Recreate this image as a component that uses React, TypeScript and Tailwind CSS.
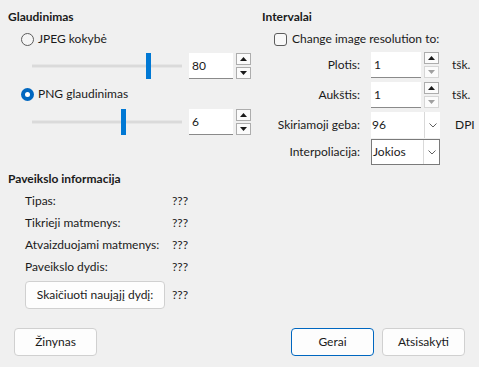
import React from 'react'

const FONT = { fontFamily: 'Lato, "Noto Sans", sans-serif' }

function Radio({ checked }: { checked?: boolean }) {
  return checked ? (
    <span className="w-[13px] h-[13px] rounded-full bg-[#0067c0] flex items-center justify-center shrink-0">
      <span className="w-[5px] h-[5px] rounded-full bg-white" />
    </span>
  ) : (
    <span className="w-[13px] h-[13px] rounded-full border border-[#5c5c5c] bg-[#f5f5f5] shrink-0" />
  )
}

function Arrow({ up, disabled }: { up?: boolean; disabled?: boolean }) {
  return (
    <svg width="7" height="4" viewBox="0 0 7 4">
      <path d={up ? 'M0 4 L3.5 0 L7 4 Z' : 'M0 0 L3.5 4 L7 0 Z'} fill={disabled ? '#a0a0a0' : '#1a1a1a'} />
    </svg>
  )
}

function SpinButtons({ downDisabled }: { downDisabled?: boolean }) {
  return (
    <div className="flex flex-col gap-[2px] ml-[3px] w-[15px]">
      <div className="h-[12px] border border-[#adadad] bg-[#fbfbfb] flex items-center justify-center">
        <Arrow up />
      </div>
      <div className={`h-[12px] border ${downDisabled ? 'border-[#d5d5d5]' : 'border-[#adadad]'} bg-[#fbfbfb] flex items-center justify-center`}>
        <Arrow disabled={downDisabled} />
      </div>
    </div>
  )
}

function SpinBox({ value, width, downDisabled }: { value: string; width: string; downDisabled?: boolean }) {
  return (
    <div className="flex items-center h-[26px]">
      <div className={`${width} h-[26px] bg-white border-b border-[#8a8a8a] flex items-center pl-[3px] text-[#1a1a1a]`}>{value}</div>
      <SpinButtons downDisabled={downDisabled} />
    </div>
  )
}

function Slider({ pos }: { pos: number }) {
  return (
    <div className="relative w-[150px] h-[26px] flex items-center">
      <div className="w-full h-[4px] bg-[#dadada] border-y border-[#e6e6e6]" />
      <div className="absolute top-0 w-[5px] h-[26px] bg-[#0078d4]" style={{ left: pos }} />
    </div>
  )
}

function Combo({ value, bordered }: { value: string; bordered?: boolean }) {
  return (
    <div className={`flex w-[69px] h-[26px] bg-white ${bordered ? 'border border-[#7a7a7a]' : ''}`}>
      <div className="flex-1 flex items-center pl-[1px] text-[#1a1a1a]">{value}</div>
      <div className="w-[16px] border-l border-[#d9d9d9] flex items-center justify-center">
        <svg width="8" height="5" viewBox="0 0 8 5">
          <path d="M0.5 0.5 L4 4 L7.5 0.5" fill="none" stroke="#606060" strokeWidth="1" />
        </svg>
      </div>
    </div>
  )
}

function Btn({ children, primary, w }: { children: React.ReactNode; primary?: boolean; w: string }) {
  return (
    <div
      className={`${w} h-[28px] rounded-[4px] bg-[#fdfdfd] border ${primary ? 'border-[#0067c0]' : 'border-[#d0d0d0]'} flex items-center justify-center text-[#1a1a1a]`}
    >
      {children}
    </div>
  )
}

export default function App() {
  return (
    <div className="w-[479px] h-[367px] bg-[#f0f0f0] text-[12px] text-[#1a1a1a] leading-[16px] overflow-hidden" style={FONT}>
      <div className="flex pt-[9px]">
        {/* left column */}
        <div className="w-[254px] pl-[8px]">
          <div className="font-bold h-[16px]">Glaudinimas</div>
          <div className="flex items-center gap-[4px] ml-[13px] mt-[6px] h-[16px]">
            <Radio />
            <span>JPEG kokybė</span>
          </div>
          <div className="flex items-center ml-[24px] mt-[6px] gap-[7px]">
            <Slider pos={114} />
            <SpinBox value="80" width="w-[44px]" />
          </div>
          <div className="flex items-center gap-[4px] ml-[13px] mt-[7px] h-[16px]">
            <Radio checked />
            <span>PNG glaudinimas</span>
          </div>
          <div className="flex items-center ml-[24px] mt-[7px] gap-[7px]">
            <Slider pos={89} />
            <SpinBox value="6" width="w-[44px]" />
          </div>
        </div>

        {/* right column */}
        <div className="flex-1">
          <div className="font-bold h-[16px] ml-[8px]">Intervalai</div>
          <div className="flex items-center gap-[5px] ml-[20px] mt-[6px] h-[16px]">
            <span className="w-[13px] h-[13px] rounded-[3px] border border-[#5c5c5c] bg-[#f8f8f8]" />
            <span>Change image resolution to:</span>
          </div>
          <div className="grid grid-cols-[117px_69px_auto] items-center mt-[5px] gap-y-[4px]">
            <div className="text-right pr-[11px]">Plotis:</div>
            <SpinBox value="1" width="w-[50px]" downDisabled />
            <div className="pl-[12px]">tšk.</div>

            <div className="text-right pr-[11px]">Aukštis:</div>
            <SpinBox value="1" width="w-[50px]" downDisabled />
            <div className="pl-[12px]">tšk.</div>

            <div className="text-right pr-[11px]">Skiriamoji geba:</div>
            <Combo value="96" />
            <div className="pl-[15px]">DPI</div>
          </div>
          <div className="grid grid-cols-[117px_69px_auto] items-center mt-[1px]">
            <div className="text-right pr-[11px]">Interpoliacija:</div>
            <Combo value="Jokios" bordered />
            <div />
          </div>
        </div>
      </div>

      {/* image info */}
      <div className="pl-[8px] mt-[6px]">
        <div className="font-bold h-[16px]">Paveikslo informacija</div>
        <div className="grid grid-cols-[147px_auto] ml-[17px] mt-[6px] gap-y-[6px]">
          <div>Tipas:</div>
          <div>???</div>
          <div>Tikrieji matmenys:</div>
          <div>???</div>
          <div>Atvaizduojami matmenys:</div>
          <div>???</div>
          <div>Paveikslo dydis:</div>
          <div>???</div>
        </div>
        <div className="flex items-center ml-[17px] mt-[6px] gap-[7px]">
          <Btn w="w-[140px]">Skaičiuoti naująjį dydį:</Btn>
          <span>???</span>
        </div>
      </div>

      {/* bottom buttons */}
      <div className="flex items-center px-[14px] mt-[19px]">
        <Btn w="w-[83px]">Žinynas</Btn>
        <div className="flex-1" />
        <Btn w="w-[83px]" primary>Gerai</Btn>
        <div className="w-[8px]" />
        <Btn w="w-[83px]">Atsisakyti</Btn>
      </div>
    </div>
  )
}
